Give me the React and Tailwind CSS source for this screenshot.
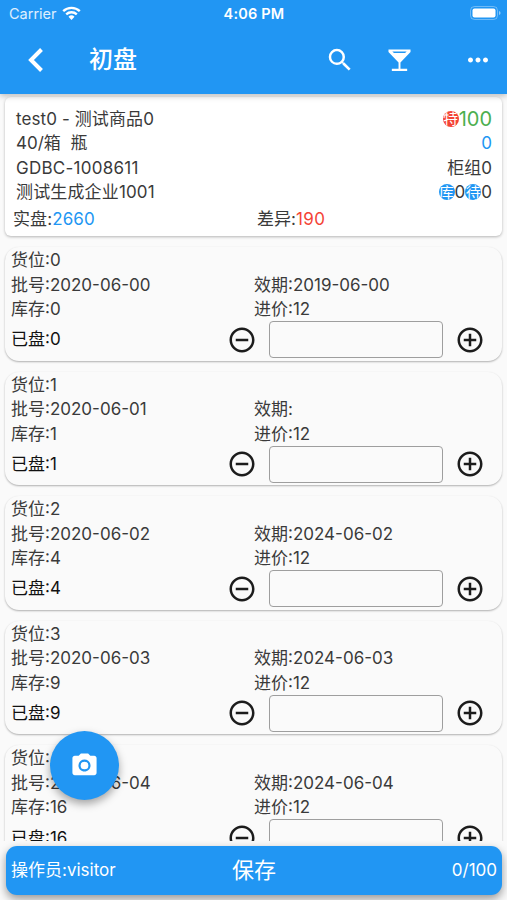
import React from "react";
import {
  MdAddCircleOutline,
  MdCameraAlt,
  MdMoreHoriz,
  MdRemoveCircleOutline,
  MdSearch,
} from "react-icons/md";

const batches = [
  { id: 0, batch: "2020-06-00", expiry: "2019-06-00", stock: 0 },
  { id: 1, batch: "2020-06-01", expiry: "", stock: 1 },
  { id: 2, batch: "2020-06-02", expiry: "2024-06-02", stock: 4 },
  { id: 3, batch: "2020-06-03", expiry: "2024-06-03", stock: 9 },
  { id: 4, batch: "2020-06-04", expiry: "2024-06-04", stock: 16 },
];

const StatusBar = () => {
  return (
    <div className="grid h-[27px] grid-cols-3 items-center pl-[9px] pr-[6px] text-[14.5px]">
      <div className="flex items-center gap-[6px] text-white/85">
        <span>Carrier</span>
        <svg className="-ml-px -mt-[2px]" width="19" height="14" viewBox="0 0 19 14" fill="none">
          <path d="M1.2 5.2a12 12 0 0 1 16.6 0" stroke="white" strokeWidth="2.4" />
          <path d="M4.2 8.4a7.6 7.6 0 0 1 10.6 0" stroke="white" strokeWidth="2.3" />
          <path d="M6.5 10.8a4.3 4.3 0 0 1 6 0L9.5 14z" fill="white" />
        </svg>
      </div>
      <span className="-ml-[2px] text-center font-semibold tracking-[0.2px]">4:06 PM</span>
      <svg className="-mt-px justify-self-end" width="31" height="14" viewBox="0 0 31 14">
        <rect x="0.5" y="0.5" width="27" height="13" rx="4" fill="none" stroke="white" strokeOpacity="0.35" />
        <rect x="2.5" y="2.5" width="23" height="9" rx="2" fill="white" />
        <path d="M29 5v4q1.6-.6 1.6-2T29 5z" fill="white" fillOpacity="0.5" />
      </svg>
    </div>
  );
};

const Header = () => {
  return (
    <header className="relative z-10 h-[94px] shrink-0 bg-[#2196f3] text-white shadow-[0_2px_6px_rgba(0,0,0,0.25)]">
      <StatusBar />
      <div className="flex h-[65px] items-center pl-[26px] pr-[14px]">
        <svg width="17" height="26" viewBox="0 0 17 26" fill="none">
          <path d="M15.500 2.5 5 13l10.500 10.500" stroke="white" strokeWidth="4" />
        </svg>
        <h1 className="ml-[46px] text-[24px] font-medium">初盘</h1>
        <MdSearch className="ml-auto text-[30px]" />
        <svg className="ml-[33px]" width="23" height="24" viewBox="0 0 24 24">
          <path
            fillRule="evenodd"
            fill="white"
            d="M.5 1h23v2.600L13 14.500V21h7v2.500H4V21h7v-6.500L.5 3.600zM4.500 3l1.700 1.800h11.600L19.500 3z"
          />
        </svg>
        <MdMoreHoriz className="ml-[52px] text-[30px]" />
      </div>
    </header>
  );
};

const Badge = ({ children, className }) => {
  return (
    <span
      className={`flex size-[16px] items-center justify-center overflow-hidden rounded-full text-[15px] leading-none text-white ${className}`}
    >
      {children}
    </span>
  );
};

const Summary = () => {
  return (
    <section className="mx-[5px] mt-[3px] h-[139px] shrink-0 rounded-[6px] bg-white pl-[11px] pr-[10px] pt-[9.500px] leading-[24.5px] shadow-[0_1px_3px_rgba(0,0,0,0.28)]">
      <div className="flex items-center justify-between">
        <span className="tracking-[0.1px]">test0 - 测试商品0</span>
        <div className="flex items-center">
          <Badge className="bg-[#f44336]">特</Badge>
          <span className="text-[20px] text-[#4caf50]">100</span>
        </div>
      </div>
      <div className="flex justify-between">
        <span className="whitespace-pre">40/箱  瓶</span>
        <span className="text-[#2196f3]">0</span>
      </div>
      <div className="flex justify-between">
        <span className="tracking-[0.25px]">GDBC-1008611</span>
        <span>柜组0</span>
      </div>
      <div className="flex justify-between">
        <span className="tracking-[0.15px]">测试生成企业1001</span>
        <div className="flex items-center">
          <Badge className="bg-[#2196f3]">库</Badge>
          <span>0</span>
          <Badge className="bg-[#2196f3]">待</Badge>
          <span>0</span>
        </div>
      </div>
      <div className="-ml-[3px] mt-[2px] flex">
        <span className="w-[244px] tracking-[0.1px]">
          实盘:<span className="text-[#2196f3]">2660</span>
        </span>
        <span>
          差异:<span className="tracking-[0.5px] text-[#f44336]">190</span>
        </span>
      </div>
    </section>
  );
};

const BatchCard = ({ item }) => {
  return (
    <li className="h-[113.6px] shrink-0 rounded-[14px] bg-[#fafafa] pl-[6px] pt-[1px] leading-[24.5px] shadow-[0_1px_2px_rgba(0,0,0,0.3)]">
      <p>货位:{item.id}</p>
      <div className="flex">
        <span className="w-[243px]">批号:{item.batch}</span>
        <span>效期:{item.expiry}</span>
      </div>
      <div className="flex">
        <span className="w-[243px]">库存:{item.stock}</span>
        <span>进价:12</span>
      </div>
      <div className="-mt-[0.5px] flex h-[37px] items-center text-[#111]">
        <span className="w-[216px]">已盘:{item.stock}</span>
        <button type="button">
          <MdRemoveCircleOutline className="text-[30px] text-[#1c1c1c]" />
        </button>
        <input
          type="text"
          className="ml-[12px] h-[37px] w-[174px] rounded-[4px] border border-[#9e9e9e] px-2"
        />
        <button type="button" className="ml-[12px]">
          <MdAddCircleOutline className="text-[30px] text-[#1c1c1c]" />
        </button>
      </div>
    </li>
  );
};

const App = () => {
  return (
    <div className="relative flex h-[900px] w-[507px] flex-col overflow-hidden bg-[#fafafa] font-[Inter,'Noto_Sans_CJK_SC',sans-serif] text-[17px] text-[#3a3a3a]">
      <Header />
      <main className="flex h-[747px] flex-col overflow-hidden">
        <Summary />
        <ul className="mx-[5px] mt-[11px] flex flex-col gap-[11px]">
          {batches.map((item) => (
            <BatchCard key={item.id} item={item} />
          ))}
        </ul>
      </main>
      <footer className="ml-[6px] mr-[5px] mt-[5px] grid h-[49px] shrink-0 grid-cols-3 items-center rounded-[11px] bg-[#2196f3] px-[5px] text-white shadow-[0_4px_10px_rgba(0,0,0,0.4)]">
        <span>操作员:visitor</span>
        <button type="button" className="text-[22px]">
          保存
        </button>
        <span className="text-right">0/100</span>
      </footer>
      <button
        type="button"
        className="absolute left-[50px] top-[731px] flex size-[69px] items-center justify-center rounded-full bg-[#2196f3] text-white shadow-[0_4px_9px_rgba(0,0,0,0.35)]"
      >
        <MdCameraAlt className="text-[29px]" />
      </button>
    </div>
  );
};

export default App;
